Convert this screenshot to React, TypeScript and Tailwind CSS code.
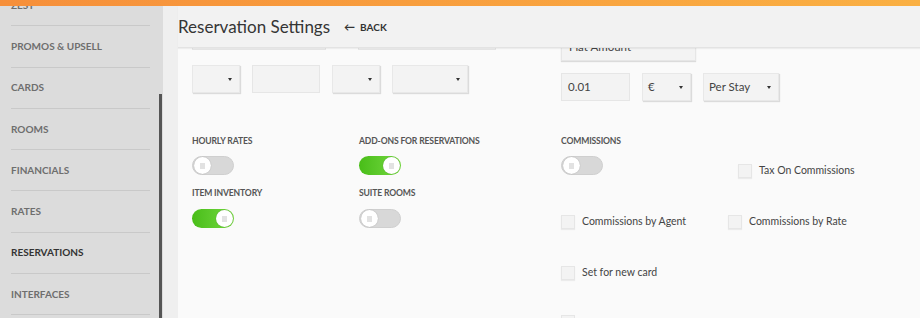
import React from "react";

const font = { fontFamily: "Lato, 'Open Sans', sans-serif" };

function Toggle({ on }: { on: boolean }) {
  return (
    <div
      className={
        "relative w-[42px] h-[19px] rounded-full flex items-center " +
        (on
          ? "bg-gradient-to-r from-[#48bd17] to-[#74d93f] justify-end"
          : "bg-[#d8d8d8] border border-[#cfcfcf] justify-start")
      }
    >
      <div className="w-[17px] h-[17px] mx-[1px] rounded-full bg-white shadow-[0_0_1px_rgba(0,0,0,0.3)] flex items-center justify-center">
        <div className="w-[5px] h-[6px] bg-[#e2e2e2]" />
      </div>
    </div>
  );
}

function Select({ w, label }: { w: string; label?: string }) {
  return (
    <div
      className={
        w +
        " h-[28px] bg-[#f3f3f3] border border-[#e8e8e8] shadow-[1px_1px_1px_rgba(0,0,0,0.12)] flex items-center justify-between pl-[5px] pr-[7px] text-[11.5px] text-[#444]"
      }
    >
      <span>{label ?? ""}</span>
      <span className="w-0 h-0 border-l-[2.5px] border-r-[2.5px] border-t-[3px] border-l-transparent border-r-transparent border-t-[#333]" />
    </div>
  );
}

function Input({ w, value }: { w: string; value?: string }) {
  return (
    <div
      className={
        w +
        " h-[28px] bg-[#f3f3f3] border border-[#e6e6e6] flex items-center px-[6px] text-[11.5px] text-[#444]"
      }
    >
      {value ?? ""}
    </div>
  );
}

function Check({ label }: { label: string }) {
  return (
    <div className="flex items-center h-[14px]">
      <div className="w-[14px] h-[14px] bg-[#f3f3f3] border border-[#e6e6e6] shadow-[0_1px_1px_rgba(0,0,0,0.06)]" />
      <span className="ml-[7px] text-[10.5px] text-[#444]">{label}</span>
    </div>
  );
}

function Label({ children }: { children: React.ReactNode }) {
  return (
    <div className="h-[12px] leading-[12px] text-[8.6px] font-bold text-[#555] uppercase tracking-[-0.15px]">
      {children}
    </div>
  );
}

const navItems = [
  "ZEST",
  "PROMOS & UPSELL",
  "CARDS",
  "ROOMS",
  "FINANCIALS",
  "RATES",
  "RESERVATIONS",
  "INTERFACES",
  "USERS",
];

export default function App() {
  return (
    <div className="w-[920px] h-[318px] overflow-hidden flex flex-col bg-[#fafafa]" style={font}>
      <div className="h-[6px] shrink-0 bg-gradient-to-r from-[#f68f3a] to-[#fab043]" />
      <div className="flex flex-1 min-h-0">
        {/* Sidebar */}
        <div className="relative w-[163px] shrink-0 bg-[#dcdcdc] overflow-hidden">
          <div className="mt-[-21px] px-[11px] pr-[13px]">
            {navItems.map((n) => (
              <div
                key={n}
                className={
                  "h-[41.3px] flex items-center border-b border-[#c9c9c9] text-[10px] font-bold " +
                  (n === "RESERVATIONS" ? "text-[#333]" : "text-[#6e6e6e]")
                }
              >
                {n}
              </div>
            ))}
          </div>
          <div className="absolute right-[1px] top-[88px] bottom-0 w-[3px] bg-[#555]" />
        </div>
        <div className="w-[15px] shrink-0 bg-[#efefef]" />
        {/* Main */}
        <div className="flex-1 flex flex-col min-w-0">
          <div className="h-[42px] shrink-0 bg-[#f2f2f2] border-b border-[#e3e3e3] shadow-[0_1px_1px_rgba(0,0,0,0.05)] flex items-center z-10">
            <span className="text-[17px] text-[#353535] mt-[1px]">Reservation Settings</span>
            <span className="ml-[14px] text-[10px] text-[#333] font-bold flex items-center mt-[2px]">
              <span className="text-[11px] mr-[5px]">&#8592;</span>BACK
            </span>
          </div>
          <div className="flex-1 overflow-hidden pl-[14px]">
            {/* top fields */}
            <div className="flex">
              <div className="w-[369px] flex flex-col">
                <div className="flex mt-[-26px]">
                  <Input w="w-[134px]" />
                  <div className="ml-[32px]">
                    <Input w="w-[138px]" />
                  </div>
                </div>
                <div className="flex mt-[15px] gap-[12px]">
                  <Select w="w-[48px]" />
                  <Input w="w-[68px]" />
                  <Select w="w-[48px]" />
                  <Select w="w-[76px]" />
                </div>
              </div>
              <div className="flex flex-col">
                <div className="mt-[-15px] w-[135px] h-[28px] bg-[#f3f3f3] border border-[#e6e6e6] shadow-[0_1px_1px_rgba(0,0,0,0.12)] flex items-center px-[7px] text-[11.5px] text-[#444]">
                  Flat Amount
                </div>
                <div className="flex mt-[12px] gap-[12px] items-center">
                  <Input w="w-[69px]" value="0.01" />
                  <Select w="w-[49px]" label="€" />
                  <Select w="w-[76px]" label="Per Stay" />
                </div>
              </div>
            </div>
            {/* toggles */}
            <div className="flex mt-[34px]">
              <div className="w-[167px] flex flex-col">
                <Label>Hourly Rates</Label>
                <div className="mt-[9px]"><Toggle on={false} /></div>
                <div className="mt-[12px]"><Label>Item Inventory</Label></div>
                <div className="mt-[10px]"><Toggle on={true} /></div>
              </div>
              <div className="w-[202px] flex flex-col">
                <Label>Add-ons for Reservations</Label>
                <div className="mt-[9px]"><Toggle on={true} /></div>
                <div className="mt-[12px]"><Label>Suite Rooms</Label></div>
                <div className="mt-[10px]"><Toggle on={false} /></div>
              </div>
              <div className="flex flex-col">
                <div className="flex">
                  <div className="w-[177px] flex flex-col">
                    <Label>Commissions</Label>
                    <div className="mt-[9px]"><Toggle on={false} /></div>
                  </div>
                  <div className="mt-[29px]">
                    <Check label="Tax On Commissions" />
                  </div>
                </div>
                <div className="flex mt-[37px]">
                  <div className="w-[167px]"><Check label="Commissions by Agent" /></div>
                  <Check label="Commissions by Rate" />
                </div>
                <div className="mt-[37px]"><Check label="Set for new card" /></div>
                <div className="mt-[35px] w-[14px] h-[14px] bg-[#f3f3f3] border border-[#e6e6e6]" />
              </div>
            </div>
          </div>
        </div>
      </div>
    </div>
  );
}
